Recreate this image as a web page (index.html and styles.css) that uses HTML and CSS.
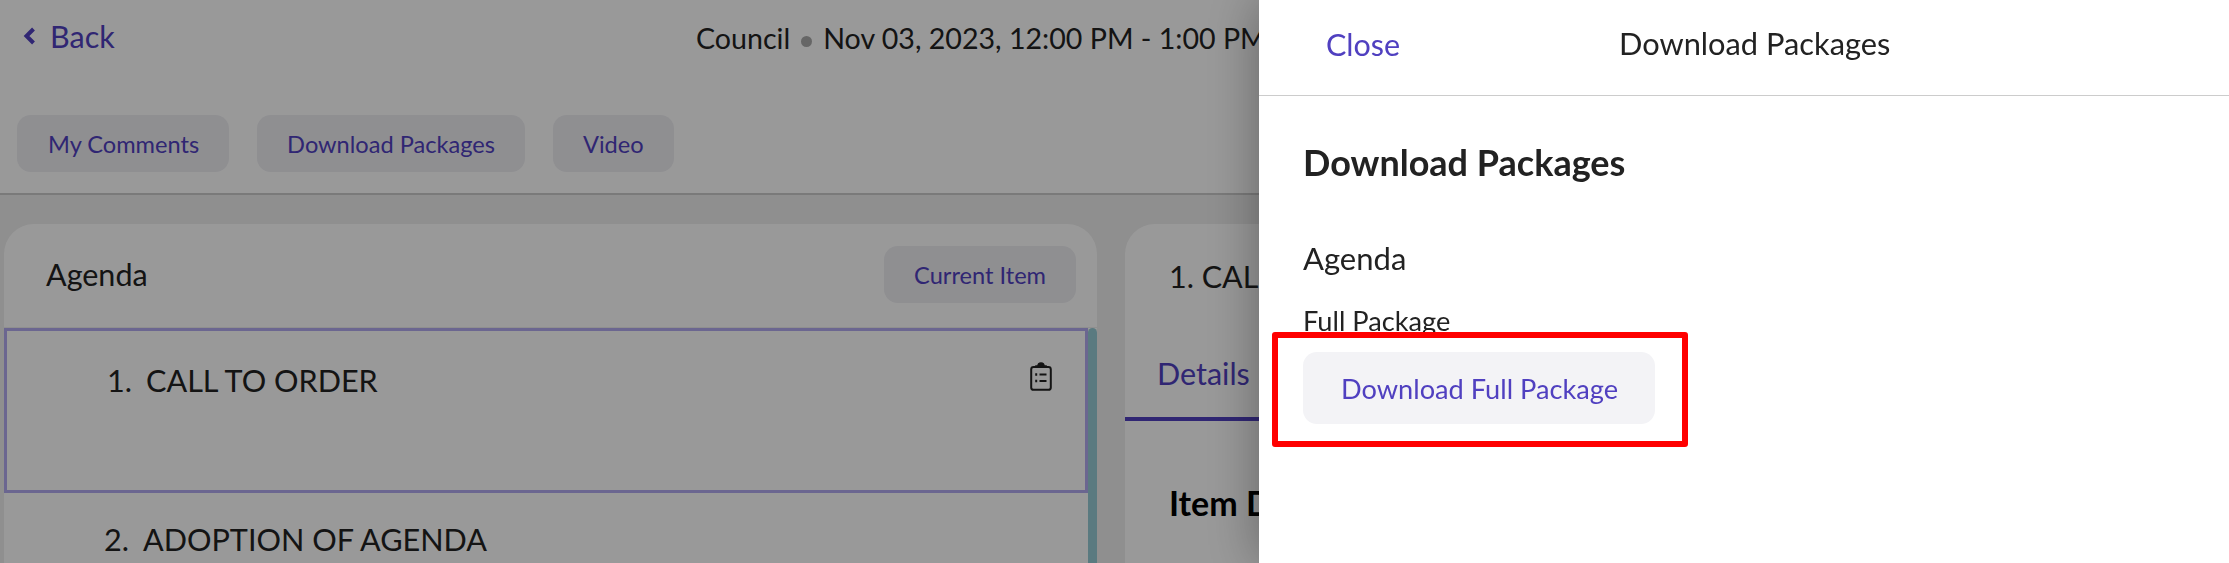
FILE: index.html
```html
<!DOCTYPE html>
<html lang="en">

<head>
    <meta charset="UTF-8">
    <meta name="viewport" content="width=device-width, initial-scale=1.0">
    <title>Download Packages</title>
    <link rel="stylesheet" href="styles.css">
</head>

<body>

    <div class="page">
        <header class="top-bar">
            <a class="back-link" href="#">
                <svg class="back-icon" viewBox="0 0 13 18" width="13" height="18">
                    <path d="M10.5 2 L3.5 9 L10.5 16" fill="none" stroke="currentColor" stroke-width="4" />
                </svg>
                Back
            </a>
            <div class="meeting-info">
                <span>Council</span>
                <span class="dot"></span>
                <span>Nov 03, 2023, 12:00 PM - 1:00 PM</span>
            </div>
        </header>

        <nav class="action-bar">
            <button class="soft-button">My Comments</button>
            <button class="soft-button">Download Packages</button>
            <button class="soft-button">Video</button>
        </nav>

        <main class="columns">
            <section class="card agenda-card">
                <div class="card-head">
                    <h2>Agenda</h2>
                    <button class="soft-button">Current Item</button>
                </div>
                <div class="agenda-body">
                    <ol class="agenda-list">
                        <li class="agenda-item selected">
                            <span class="item-number">1.</span>
                            <span class="item-title">CALL TO ORDER</span>
                            <svg class="item-icon" viewBox="0 0 22 29" width="22" height="29">
                                <rect x="1.2" y="5" width="19.6" height="22.8" rx="2.4" fill="none" stroke="currentColor" stroke-width="2" />
                                <path d="M6 5 V4 H8 A3 3 0 0 1 14 4 H16 V5 Z" fill="currentColor" stroke="currentColor" stroke-width="1.6" />
                                <path d="M9.5 12.5 H16.5 M9.5 19 H16.5" stroke="currentColor" stroke-width="2" />
                                <path d="M5.2 12.5 H7.2 M5.2 19 H7.2" stroke="currentColor" stroke-width="2.4" />
                            </svg>
                        </li>
                        <li class="agenda-item">
                            <span class="item-number">2.</span>
                            <span class="item-title">ADOPTION OF AGENDA</span>
                        </li>
                    </ol>
                    <div class="agenda-rail"></div>
                </div>
            </section>

            <section class="card detail-card">
                <h2 class="detail-title">1. CALL TO ORDER</h2>
                <div class="tabs">
                    <span class="tab active">Details</span>
                </div>
                <h3 class="detail-heading">Item Details</h3>
            </section>
        </main>
    </div>

    <div class="overlay"></div>

    <aside class="drawer">
        <div class="drawer-head">
            <a class="close-link" href="#">Close</a>
            <span class="drawer-title">Download Packages</span>
        </div>
        <div class="drawer-body">
            <h2>Download Packages</h2>
            <h3>Agenda</h3>
            <p class="package-label">Full Package</p>
            <button class="soft-button download-button">Download Full Package</button>
            <div class="highlight-box"></div>
        </div>
    </aside>

</body>

</html>
```

FILE: styles.css
```css
* {
    box-sizing: border-box;
}

body {
    margin: 0;
    padding: 0;
    height: 563px;
    overflow: hidden;
    font-family: Lato, "Open Sans", sans-serif;
    color: #222;
    background-color: #eee;
}

h2,
h3,
p,
ol {
    margin: 0;
    padding: 0;
}

a {
    text-decoration: none;
}

.soft-button {
    height: 57px;
    padding: 0 30px;
    border: 0;
    border-radius: 14px;
    font-family: inherit;
    font-size: 23.6px;
    color: #5040c0;
    background-color: #eeeef2;
}

/* page under the drawer */
.page {
    height: 563px;
    overflow: hidden;
}

.top-bar {
    display: grid;
    grid-template-columns: 696px 1fr;
    height: 115px;
    background-color: #fff;
}

.back-link {
    display: flex;
    align-items: flex-start;
    gap: 14px;
    padding: 18px 0 0 23px;
    font-size: 30.5px;
    line-height: 36px;
    color: #5040c0;
}

.back-icon {
    margin-top: 9px;
}

.meeting-info {
    display: flex;
    align-items: flex-start;
    gap: 11px;
    padding-top: 20px;
    font-size: 28.6px;
    line-height: 36px;
    white-space: nowrap;
}

.dot {
    width: 11px;
    height: 11px;
    margin-top: 16px;
    border-radius: 50%;
    background-color: #aaa;
}

.action-bar {
    display: flex;
    gap: 28px;
    height: 80px;
    padding-left: 17px;
    border-bottom: 2px solid #ccc;
    background-color: #fff;
}

.action-bar .soft-button:first-child {
    padding-left: 31px;
}

.columns {
    display: flex;
    gap: 28px;
    height: 368px;
    padding: 29px 0 0 4px;
}

.card {
    height: 339px;
    overflow: hidden;
    border-radius: 30px 30px 0 0;
    background-color: #fff;
}

.agenda-card {
    display: flex;
    flex-direction: column;
    width: 1093px;
}

.card-head {
    display: flex;
    align-items: flex-start;
    justify-content: space-between;
    height: 104px;
    padding: 22px 21px 0 42px;
    border-bottom: 1px solid #eee;
}

.card-head h2 {
    padding-top: 10px;
    font-size: 30.5px;
    line-height: 36px;
    font-weight: 400;
}

.agenda-body {
    display: flex;
    flex: 1;
}

.agenda-list {
    flex: 1;
    list-style: none;
}

.agenda-item {
    display: flex;
    align-items: flex-start;
    padding: 29px 33px 0 100px;
    font-size: 30.6px;
    line-height: 36px;
}

.agenda-item.selected {
    height: 165px;
    padding-top: 32px;
    border: 3px solid #b2aaf0;
}

.item-number {
    width: 39px;
}

.item-title {
    flex: 1;
}

.item-icon {
    margin-top: -1px;
    color: #222;
}

.agenda-rail {
    width: 9px;
    border-radius: 5px 5px 0 0;
    background-color: #96cbd5;
}

.detail-card {
    flex: 1;
}

.detail-title {
    padding: 34px 0 0 44px;
    font-size: 30.5px;
    line-height: 36px;
    font-weight: 400;
    white-space: nowrap;
}

.tabs {
    height: 66px;
    margin-top: 61px;
    border-bottom: 4px solid #5040c0;
}

.tab {
    display: block;
    padding-left: 32px;
    font-size: 30.5px;
    line-height: 36px;
    color: #5040c0;
}

.detail-heading {
    padding: 62px 0 0 44px;
    font-size: 34px;
    line-height: 40px;
    font-weight: 700;
    color: #000;
    white-space: nowrap;
}

/* dim layer and the slide-in drawer */
.overlay {
    position: fixed;
    inset: 0;
    background-color: rgba(0, 0, 0, 0.4);
}

.drawer {
    position: fixed;
    top: 0;
    right: 0;
    bottom: 0;
    width: 970px;
    background-color: #fff;
    box-shadow: 0 0 50px rgba(0, 0, 0, 0.35);
}

.drawer-head {
    display: flex;
    align-items: flex-start;
    height: 96px;
    padding: 26px 0 0 67px;
    border-bottom: 1px solid #ccc;
    font-size: 30.8px;
    line-height: 36px;
}

.close-link {
    width: 293px;
    font-size: 30.5px;
    color: #5040c0;
}

.drawer-body {
    position: relative;
    padding: 44px 44px 0;
}

.drawer-body h2 {
    font-size: 36px;
    line-height: 44px;
    font-weight: 700;
}

.drawer-body h3 {
    margin-top: 56px;
    font-size: 31px;
    line-height: 36px;
    font-weight: 400;
}

.package-label {
    margin-top: 29px;
    font-size: 27.2px;
    line-height: 32px;
}

.download-button {
    display: block;
    height: 72px;
    margin-top: 15px;
    padding: 0 37px 0 38px;
    font-size: 27.2px;
    background-color: #f3f3f6;
}

/* annotation drawn over the screenshot */
.highlight-box {
    position: absolute;
    left: 13px;
    top: 236px;
    width: 416px;
    height: 115px;
    border: 6px solid #f00;
    border-radius: 3px;
}
```
